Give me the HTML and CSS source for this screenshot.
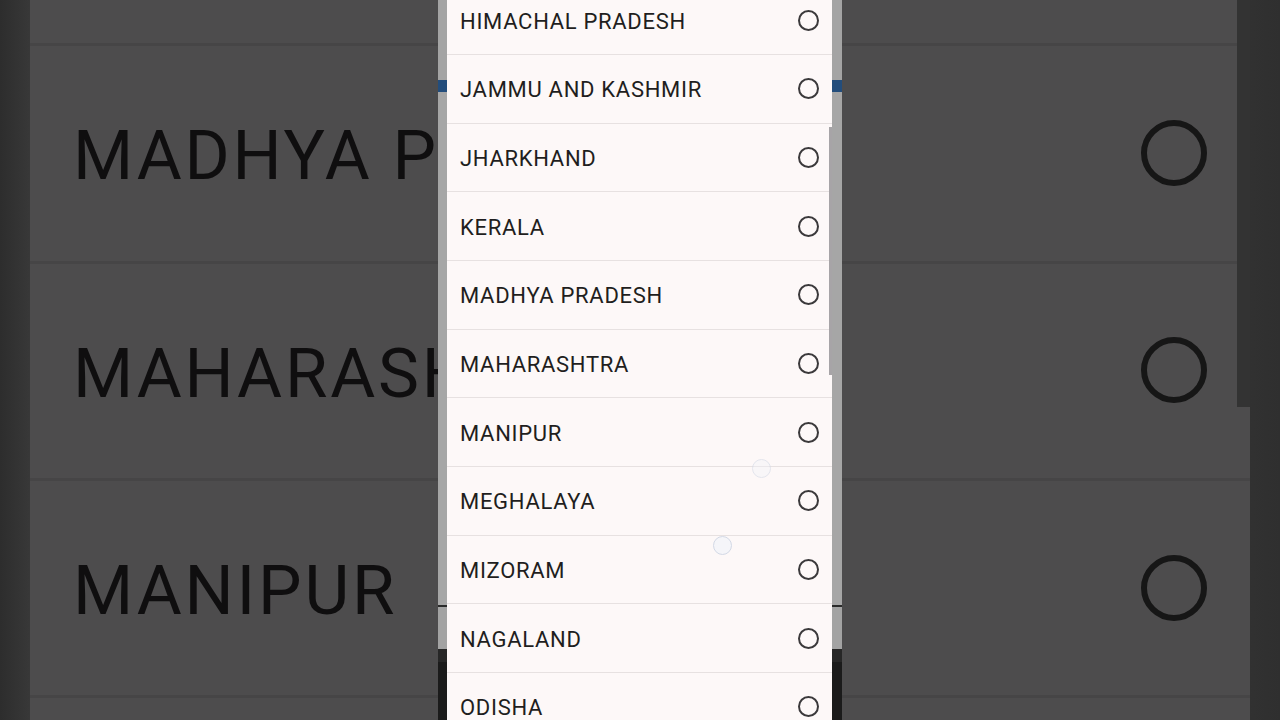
FILE: index.html
```html
<!DOCTYPE html>
<html lang="en">
<head>
  <meta charset="UTF-8">
  <title>Select State</title>
  <meta name="viewport" content="width=device-width, initial-scale=1.0">
  <link rel="stylesheet" href="styles.css">
</head>
<body>

  <!-- blurred, zoomed copy of the list behind the video -->
  <div class="backdrop">
    <div class="zoom-panel">
      <div class="zoom-scroll"></div>
      <ul class="zoom-list">
        <li class="zoom-row"><span>KERALA</span><i class="zoom-radio"></i></li>
        <li class="zoom-row"><span>MADHYA PRADESH</span><i class="zoom-radio"></i></li>
        <li class="zoom-row"><span>MAHARASHTRA</span><i class="zoom-radio"></i></li>
        <li class="zoom-row"><span>MANIPUR</span><i class="zoom-radio"></i></li>
        <li class="zoom-row"><span>MEGHALAYA</span><i class="zoom-radio"></i></li>
      </ul>
    </div>
  </div>

  <div class="phone">
    <div class="dialog">
      <div class="scroll-thumb"></div>
      <ul class="state-list">
        <li class="state-row"><span>HIMACHAL PRADESH</span><i class="radio"></i></li>
        <li class="state-row"><span>JAMMU AND KASHMIR</span><i class="radio"></i></li>
        <li class="state-row"><span>JHARKHAND</span><i class="radio"></i></li>
        <li class="state-row"><span>KERALA</span><i class="radio"></i></li>
        <li class="state-row"><span>MADHYA PRADESH</span><i class="radio"></i></li>
        <li class="state-row"><span>MAHARASHTRA</span><i class="radio"></i></li>
        <li class="state-row"><span>MANIPUR</span><i class="radio"></i></li>
        <li class="state-row"><span>MEGHALAYA</span><i class="radio"></i></li>
        <li class="state-row"><span>MIZORAM</span><i class="radio"></i></li>
        <li class="state-row"><span>NAGALAND</span><i class="radio"></i></li>
        <li class="state-row"><span>ODISHA</span><i class="radio"></i></li>
      </ul>
    </div>
    <div class="touch touch-a"></div>
    <div class="touch touch-b"></div>
  </div>

</body>
</html>
```

FILE: styles.css
```css
* { box-sizing: border-box; margin: 0; padding: 0; }
body {
  width: 1280px;
  height: 720px;
  overflow: hidden;
  position: relative;
  background: #323232;
  font-family: Roboto, "Noto Sans", Arial, sans-serif;
}

/* zoomed backdrop */
.backdrop {
  height: 100%;
  padding-left: 30px;
  background: linear-gradient(90deg, #2d2d2d 0, #383838 30px, #323232 1240px, #2f2f2f 100%);
}

.zoom-panel {
  position: relative;
  width: 1220px;
  height: 100%;
  background: #4d4c4d;
  overflow: hidden;
}

.zoom-scroll {
  position: absolute;
  right: 0;
  top: 0;
  width: 13px;
  height: 407px;
  background: #333;
}

.zoom-list { list-style: none; margin-top: -171px; }

.zoom-row {
  height: 217.3px;
  display: flex;
  align-items: center;
  justify-content: space-between;
  padding: 5px 43px 0 43px;
  border-bottom: 3px solid #464546;
  font-size: 69px;
  letter-spacing: 2.8px;
  color: #0f0e0f;
  white-space: nowrap;
}

.zoom-row span { flex: 1; }

.zoom-radio {
  width: 66px;
  height: 66px;
  margin-top: -6px;
  border: 6px solid #161616;
  border-radius: 50%;
  flex: none;
}

/* the phone screen */
.phone {
  position: absolute;
  left: 438px;
  top: 0;
  width: 404px;
  height: 720px;
  padding-left: 9px;
  padding-right: 10px;
  background:
    linear-gradient(#a4a4a4 0, #a4a4a4 80px, #234d7c 80px, #234d7c 92px, #a6a6a6 92px, #a6a6a6 605px, #2a2a2a 605px, #2a2a2a 607px, #a3a3a3 607px, #a3a3a3 649px, #272727 649px, #272727 662px, #1b1b1b 662px);
}

.dialog {
  position: relative;
  height: 100%;
  background: #fdf8f8;
  overflow: hidden;
}

.scroll-thumb {
  position: absolute;
  right: 0;
  top: 127px;
  width: 3px;
  height: 248px;
  background: #a7a4a7;
}

.state-list { list-style: none; margin-top: -13.5px; }

.state-row {
  height: 68.65px;
  display: flex;
  align-items: center;
  justify-content: space-between;
  padding: 2px 13px 0 13px;
  border-bottom: 1px solid #e7e1e1;
  font-size: 22px;
  letter-spacing: 0.7px;
  color: #1f1e20;
  white-space: nowrap;
}

.radio {
  width: 21px;
  height: 21px;
  margin-top: -2px;
  border: 2px solid #3b393b;
  border-radius: 50%;
  flex: none;
}

.touch {
  position: absolute;
  width: 19px;
  height: 19px;
  border: 1px solid #d3d9e6;
  border-radius: 50%;
  background: rgba(240, 243, 250, 0.6);
}

.touch-a { left: 314px; top: 459px; opacity: 0.6; }
.touch-b { left: 275px; top: 536px; }
```
